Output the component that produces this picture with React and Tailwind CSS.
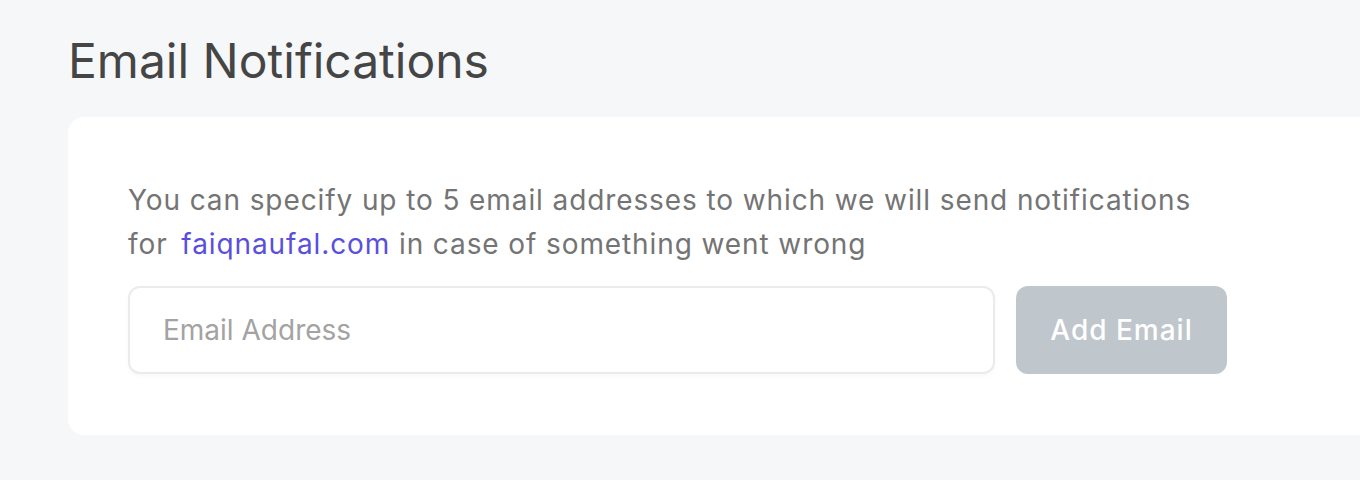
export default function App() {
    return (
        <div className="h-[480px] w-full overflow-hidden bg-[#f6f7f9] pl-[68px] pt-[37px] font-['Inter',sans-serif]">
            <h1 className="text-[48px] leading-[48px] text-[#454545]">Email Notifications</h1>
            <div className="mt-[32px] w-[1340px] rounded-2xl bg-white px-[60px] pb-[61px] pt-[61px]">
                <p className="text-[28px] leading-[44px] tracking-[0.9px] text-[#747474]">
                    You can specify up to 5 email addresses to which we will send notifications
                    <br />
                    for <span className="ml-[5px] text-[#5a4fdc]">faiqnaufal.com</span> in case of something went wrong
                </p>
                <div className="mt-[20px] flex gap-[21px]">
                    <input
                        type="email"
                        placeholder="Email Address"
                        className="h-[88px] w-[867px] rounded-xl border-2 border-[#ebebeb] bg-white px-[33px] text-[28px] text-[#454545] shadow-[0_2px_4px_rgba(0,0,0,0.03)] outline-none placeholder:text-[#a3a3a3]"
                    />
                    <button
                        type="button"
                        className="h-[88px] w-[211px] rounded-xl bg-[#bfc6cc] text-[28px] font-medium tracking-[1px] text-white"
                    >
                        Add Email
                    </button>
                </div>
            </div>
        </div>
    );
}
